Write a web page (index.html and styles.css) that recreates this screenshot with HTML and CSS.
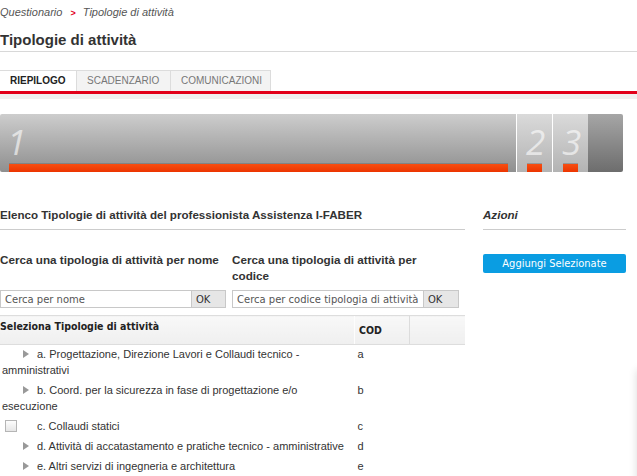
FILE: index.html
```html
<!DOCTYPE HTML>
<html>
<head>
  <meta charset="utf-8">
  <meta name="viewport" content="width=device-width" />
  <title>Tipologie di attività</title>
  <link rel="stylesheet" href="styles.css">
</head>

<body>
  <div class="page-header">
    <div class="breadcrumb">
      <a class="breadcrumb-link" href="#">Questionario</a>
      <span class="breadcrumb-sep">&gt;</span>
      <span class="breadcrumb-current">Tipologie di attività</span>
    </div>
    <h1 class="page-title">Tipologie di attività</h1>
  </div>

  <nav class="tabs">
    <a class="tab active" href="#">RIEPILOGO</a>
    <a class="tab" href="#">SCADENZARIO</a>
    <a class="tab" href="#">COMUNICAZIONI</a>
  </nav>

  <div class="steps">
    <div class="step step--first">
      <span class="step-num">1</span>
      <span class="step-bar"></span>
    </div>
    <div class="step step--small">
      <span class="step-num">2</span>
      <span class="step-bar"></span>
    </div>
    <div class="step step--small">
      <span class="step-num">3</span>
      <span class="step-bar"></span>
    </div>
    <div class="step step--end"></div>
  </div>

  <div class="content">
    <main class="main">
      <h2 class="section-title">Elenco Tipologie di attività del professionista Assistenza I-FABER</h2>

      <div class="search">
        <div class="search-col">
          <h3 class="search-title">Cerca una tipologia di attività per nome</h3>
          <div class="search-field">
            <input class="search-input" type="text" placeholder="Cerca per nome">
            <button class="search-ok">OK</button>
          </div>
        </div>
        <div class="search-col">
          <h3 class="search-title">Cerca una tipologia di attività per codice</h3>
          <div class="search-field">
            <input class="search-input" type="text" placeholder="Cerca per codice tipologia di attività">
            <button class="search-ok">OK</button>
          </div>
        </div>
      </div>

      <table class="tree">
        <thead>
          <tr>
            <th class="tree-name">Seleziona Tipologie di attività</th>
            <th class="tree-cod">COD</th>
            <th class="tree-extra"></th>
          </tr>
        </thead>
        <tbody>
          <tr>
            <td class="tree-name"><span class="toggle"></span>a. Progettazione, Direzione Lavori e Collaudi tecnico - amministrativi</td>
            <td class="tree-cod">a</td>
            <td></td>
          </tr>
          <tr>
            <td class="tree-name"><span class="toggle"></span>b. Coord. per la sicurezza in fase di progettazione e/o esecuzione</td>
            <td class="tree-cod">b</td>
            <td></td>
          </tr>
          <tr>
            <td class="tree-name"><span class="check"></span>c. Collaudi statici</td>
            <td class="tree-cod">c</td>
            <td></td>
          </tr>
          <tr>
            <td class="tree-name"><span class="toggle"></span>d. Attività di accatastamento e pratiche tecnico - amministrative</td>
            <td class="tree-cod">d</td>
            <td></td>
          </tr>
          <tr>
            <td class="tree-name"><span class="toggle"></span>e. Altri servizi di ingegneria e architettura</td>
            <td class="tree-cod">e</td>
            <td></td>
          </tr>
        </tbody>
      </table>
    </main>

    <aside class="actions">
      <h2 class="section-title section-title--italic">Azioni</h2>
      <button class="btn-primary">Aggiungi Selezionate</button>
    </aside>
  </div>

  <div class="edge-shadow"></div>
</body>
</html>
```

FILE: styles.css
```css
body {
  margin: 0;
  background-color: white;
  color: #333;
  font-family: "Liberation Sans", Arial, sans-serif;
  font-size: 11px;
  overflow: hidden;
}

h1, h2, h3 {
  margin: 0;
}

/* header */

.page-header {
  padding-bottom: 2px;
  border-bottom: 1px solid #d8d8d8;
}

.breadcrumb {
  margin-top: 5px;
  line-height: 14px;
  font-style: italic;
  color: #555;
}

.breadcrumb-link {
  color: inherit;
  text-decoration: none;
}

.breadcrumb-sep {
  margin: 0 4px 0 5px;
  color: #e2001a;
  font-size: 9px;
  font-weight: bold;
  font-style: normal;
}

.page-title {
  margin-top: 11px;
  line-height: 18px;
  font-size: 15px;
  color: #333;
}

/* tabs */

.tabs {
  display: flex;
  margin-top: 18px;
  border-bottom: 3px solid #e2001a;
  box-shadow: 0 5px 0 #f0f0f0;
}

.tab {
  box-sizing: border-box;
  height: 21px;
  padding: 0 10px;
  border: 1px solid #dcdcdc;
  border-bottom: 0;
  border-left: 0;
  background-color: #f3f3f3;
  color: #777;
  font-size: 10px;
  line-height: 20px;
  text-decoration: none;
}

.tab.active {
  width: 77px;
  background-color: white;
  color: #222;
  font-weight: bold;
}

.tab:nth-child(2) {
  width: 94px;
}

.tab:nth-child(3) {
  width: 100px;
}

/* steps */

.steps {
  display: flex;
  width: 623px;
  height: 58px;
  margin-top: 20px;
  border-radius: 2px;
  overflow: hidden;
}

.step {
  display: flex;
  flex-direction: column;
  justify-content: space-between;
  box-sizing: border-box;
  background: linear-gradient(#cdcdcd, #8f8f8f);
}

.step--first {
  width: 516px;
  padding: 0 8px 0 9px;
}

.step--small {
  width: 35px;
  margin-left: 1px;
  padding: 0 10px;
  background: linear-gradient(#dadada, #b3b3b3);
}

.step--end {
  width: 35px;
  background: linear-gradient(#a6a6a6, #6d6d6d);
}

.step-num {
  margin-top: 6px;
  color: rgba(255, 255, 255, 0.6);
  font-family: "Open Sans", sans-serif;
  font-style: italic;
  font-size: 35px;
  line-height: 44px;
}

.step--first .step-num {
  margin-left: -2px;
}

.step--small .step-num {
  margin-left: -1px;
}

.step-bar {
  height: 8px;
  background: linear-gradient(#f74e12, #ec3500);
  box-shadow: 0 -1px 0 rgba(90, 90, 90, 0.35);
}

/* content */

.content {
  display: grid;
  grid-template-columns: 465px 143px;
  column-gap: 18px;
}

.section-title {
  margin-top: 35px;
  padding-bottom: 6px;
  border-bottom: 1px solid #ccc;
  font-size: 11.6px;
  line-height: 16px;
  color: #333;
}

.section-title--italic {
  font-style: italic;
}

/* search */

.search {
  display: grid;
  grid-template-columns: 226px 227px;
  column-gap: 6px;
  margin-top: 22px;
}

.search-col {
  display: flex;
  flex-direction: column;
  justify-content: space-between;
}

.search-title {
  margin-bottom: 6px;
  padding-right: 6px;
  font-size: 11.7px;
  line-height: 16px;
  color: #333;
}

.search-field {
  display: flex;
}

.search-input {
  box-sizing: border-box;
  width: 192px;
  height: 18px;
  margin: 0;
  padding: 0 4px;
  border: 1px solid #c8c8c8;
  font-family: "DejaVu Sans", Verdana, sans-serif;
  font-size: 10px;
  color: #555;
}

.search-input::placeholder {
  color: #555;
}

.search-ok {
  box-sizing: border-box;
  width: 34px;
  height: 18px;
  margin: 0;
  padding: 0 0 0 4px;
  border: 1px solid #c8c8c8;
  border-left: 0;
  background-color: #e6e6e6;
  color: #333;
  font-family: "DejaVu Sans", Verdana, sans-serif;
  font-size: 10px;
  text-align: left;
}

.search-col + .search-col .search-ok {
  width: 35px;
}

/* tree table */

.tree {
  width: 465px;
  margin-top: 7px;
  border-collapse: collapse;
}

.tree th {
  height: 26px;
  padding: 0;
  border-top: 1px solid #ddd;
  border-bottom: 1px solid #ddd;
  background: linear-gradient(#f8f8f8, #efefef);
  font-family: "DejaVu Sans Condensed", "DejaVu Sans", sans-serif;
  font-size: 10.5px;
  text-align: left;
  color: #222;
}

.tree th.tree-name {
  padding-top: 2px;
  vertical-align: top;
  line-height: 16px;
}

.tree th.tree-cod {
  width: 50px;
  padding-left: 4px;
  border-left: 1px solid #fdfdfd;
  vertical-align: middle;
}

.tree th.tree-extra {
  width: 55px;
  border-left: 1px solid #dcdcdc;
}

.tree td {
  padding: 1px 0 3px;
  line-height: 16px;
  vertical-align: top;
  color: #333;
}

.tree td.tree-name {
  padding-left: 2px;
}

.tree td.tree-cod {
  padding-left: 3px;
}

.toggle {
  display: inline-block;
  width: 0;
  height: 0;
  margin: 0 8px 0 21px;
  border-top: 4px solid transparent;
  border-bottom: 4px solid transparent;
  border-left: 6px solid #999;
}

.check {
  display: inline-block;
  box-sizing: border-box;
  width: 12px;
  height: 12px;
  margin: 0 20px -2px 3px;
  border: 1px solid #b5b5b5;
  background: linear-gradient(#fdfdfd, #e6e6e6);
}

/* actions */

.btn-primary {
  width: 143px;
  height: 19px;
  margin-top: 24px;
  padding: 0;
  border: 0;
  border-radius: 2px;
  background-color: #0a9de2;
  color: white;
  font-family: "DejaVu Sans Condensed", "DejaVu Sans", sans-serif;
  font-size: 11px;
  cursor: pointer;
}

.edge-shadow {
  position: absolute;
  top: 370px;
  right: -10px;
  width: 10px;
  height: 120px;
  box-shadow: 0 0 8px rgba(0, 0, 0, 0.15);
}
```
